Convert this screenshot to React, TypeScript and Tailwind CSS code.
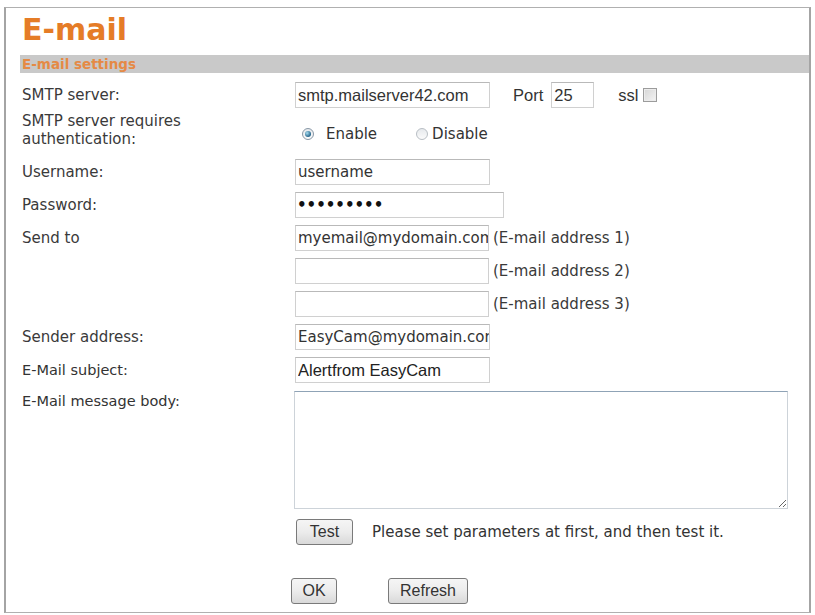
import React from "react";

const DV = "[font-family:'DejaVu_Sans',sans-serif]";
const LS = "[font-family:'Liberation_Sans',Arial,sans-serif]";

function Label({ children, small }: { children: React.ReactNode; small?: boolean }) {
  return (
    <div
      className={`w-[273px] shrink-0 ${DV} ${small ? "text-[14.5px] text-[#333]" : "text-[15px] text-[#3a3a3a]"} leading-[18px]`}
    >
      {children}
    </div>
  );
}

function Field({
  value,
  width,
  font = "ls",
}: {
  value: string;
  width: string;
  font?: "ls" | "dv" | "lsb";
}) {
  const f =
    font === "dv"
      ? `${DV} text-[15px] text-[#333]`
      : font === "lsb"
      ? `${LS} text-[16.5px] text-[#222]`
      : `${LS} text-[16.5px] text-[#333]`;
  return (
    <input
      readOnly
      value={value}
      className={`${width} h-[26px] shrink-0 border border-[#d0d0d0] border-t-[#b9b9b9] bg-white pl-[2px] pr-0 outline-none ${f}`}
    />
  );
}

function Radio({ checked }: { checked?: boolean }) {
  return (
    <span
      className={`flex h-[12px] w-[12px] shrink-0 items-center justify-center rounded-full border ${
        checked ? "border-[#8797a6]" : "border-[#b8bec4]"
      } bg-linear-to-b from-[#e6e9ec] to-[#fbfbfb]`}
    >
      {checked && (
        <span className="h-[6px] w-[6px] rounded-full bg-[radial-gradient(circle_at_35%_35%,#a6dcf0,#24648a_70%)]" />
      )}
    </span>
  );
}

function Btn({ children, width }: { children: React.ReactNode; width: string }) {
  return (
    <button
      className={`${width} h-[26px] shrink-0 rounded-[3px] border border-[#7a7a7a] bg-linear-to-b from-[#f5f5f5] via-[#ececec] to-[#d9d9d9] ${LS} text-[16px] text-[#333] leading-none`}
    >
      {children}
    </button>
  );
}

export default function App() {
  return (
    <div className="h-[615px] w-[815px] overflow-hidden bg-white pl-[4px] pt-[7px]">
      <div className="flex h-[606px] w-[807px] flex-col border-x-2 border-y border-x-[#a4a4a4] border-y-[#b0b0b0] pl-[16px]">
        <h1
          className={`mt-[7px] h-[30px] text-[30px] font-bold leading-[30px] text-[#e57c27] ${DV}`}
        >
          E-mail
        </h1>
        <div
          className={`-ml-[2px] mt-[10px] h-[18px] bg-[#c9c9c9] pl-[2px] text-[13.5px] font-bold leading-[18px] text-[#e58a45] ${DV}`}
        >
          E-mail settings
        </div>

        {/* SMTP server */}
        <div className="mt-[9px] flex h-[26px] items-center">
          <Label>SMTP server:</Label>
          <Field value="smtp.mailserver42.com" width="w-[195px]" />
          <span className={`ml-[23px] ${LS} text-[16.5px] text-[#333]`}>Port</span>
          <Field value="25" width="w-[43px] ml-[8px]" />
          <span className={`ml-[24px] ${LS} text-[16.5px] text-[#333]`}>ssl</span>
          <span className="ml-[5px] h-[14px] w-[14px] border border-[#9c9c9c] bg-linear-to-br from-[#d6d6d6] to-[#f4f4f4] shadow-[inset_0_0_0_1px_#ececec]" />
        </div>

        {/* Auth */}
        <div className="mt-[4px] flex h-[36px] items-start">
          <Label>
            SMTP server requires
            <br />
            authentication:
          </Label>
          <div className={`mt-[13px] flex h-[18px] items-center ${DV} text-[15px] text-[#333]`}>
            <span className="ml-[7px]">
              <Radio checked />
            </span>
            <span className="ml-[12px]">Enable</span>
            <span className="ml-[39px]">
              <Radio />
            </span>
            <span className="ml-[4px]">Disable</span>
          </div>
        </div>

        {/* Username */}
        <div className="mt-[11px] flex h-[26px] items-center">
          <Label>Username:</Label>
          <Field value="username" width="w-[195px]" font="dv" />
        </div>

        {/* Password */}
        <div className="mt-[7px] flex h-[26px] items-center">
          <Label>Password:</Label>
          <div
            className={`flex h-[26px] w-[209px] items-center border border-[#d0d0d0] border-t-[#b9b9b9] pl-[1px] ${DV} text-[15px] font-bold text-[#111]`}
          >
            •••••••••
          </div>
        </div>

        {/* Send to */}
        <div className="mt-[7px] flex h-[26px] items-center">
          <Label>Send to</Label>
          <Field value="myemail@mydomain.com" width="w-[194px]" font="dv" />
          <span className={`ml-[4px] ${DV} text-[15px] text-[#3a3a3a]`}>(E-mail address 1)</span>
        </div>
        <div className="mt-[7px] flex h-[26px] items-center">
          <Label>{""}</Label>
          <Field value="" width="w-[194px]" />
          <span className={`ml-[4px] ${DV} text-[15px] text-[#3a3a3a]`}>(E-mail address 2)</span>
        </div>
        <div className="mt-[7px] flex h-[26px] items-center">
          <Label>{""}</Label>
          <Field value="" width="w-[194px]" />
          <span className={`ml-[4px] ${DV} text-[15px] text-[#3a3a3a]`}>(E-mail address 3)</span>
        </div>

        {/* Sender */}
        <div className="mt-[7px] flex h-[26px] items-center">
          <Label>Sender address:</Label>
          <Field value="EasyCam@mydomain.com" width="w-[195px]" font="dv" />
        </div>

        {/* Subject */}
        <div className="mt-[7px] flex h-[26px] items-center">
          <Label small>E-Mail subject:</Label>
          <Field value="Alertfrom EasyCam" width="w-[195px]" font="lsb" />
        </div>

        {/* Body */}
        <div className="mt-[8px] flex items-start">
          <div className="pt-[1px]">
            <Label small>E-Mail message body:</Label>
          </div>
          <textarea
            readOnly
            className="-ml-[1px] h-[118px] w-[494px] shrink-0 border border-[#cdd3d9] border-t-[#8fa3b6] bg-white outline-none"
          />
        </div>

        {/* Test */}
        <div className="mt-[10px] flex h-[26px] items-center">
          <div className="w-[274px] shrink-0" />
          <Btn width="w-[57px]">Test</Btn>
          <span className={`ml-[19px] ${DV} text-[15px] text-[#333]`}>
            Please set parameters at first, and then test it.
          </span>
        </div>

        {/* OK / Refresh */}
        <div className="mt-[33px] flex h-[26px] items-center">
          <div className="w-[269px] shrink-0" />
          <Btn width="w-[46px]">OK</Btn>
          <span className="w-[51px] shrink-0" />
          <Btn width="w-[80px]">Refresh</Btn>
        </div>
      </div>
    </div>
  );
}
